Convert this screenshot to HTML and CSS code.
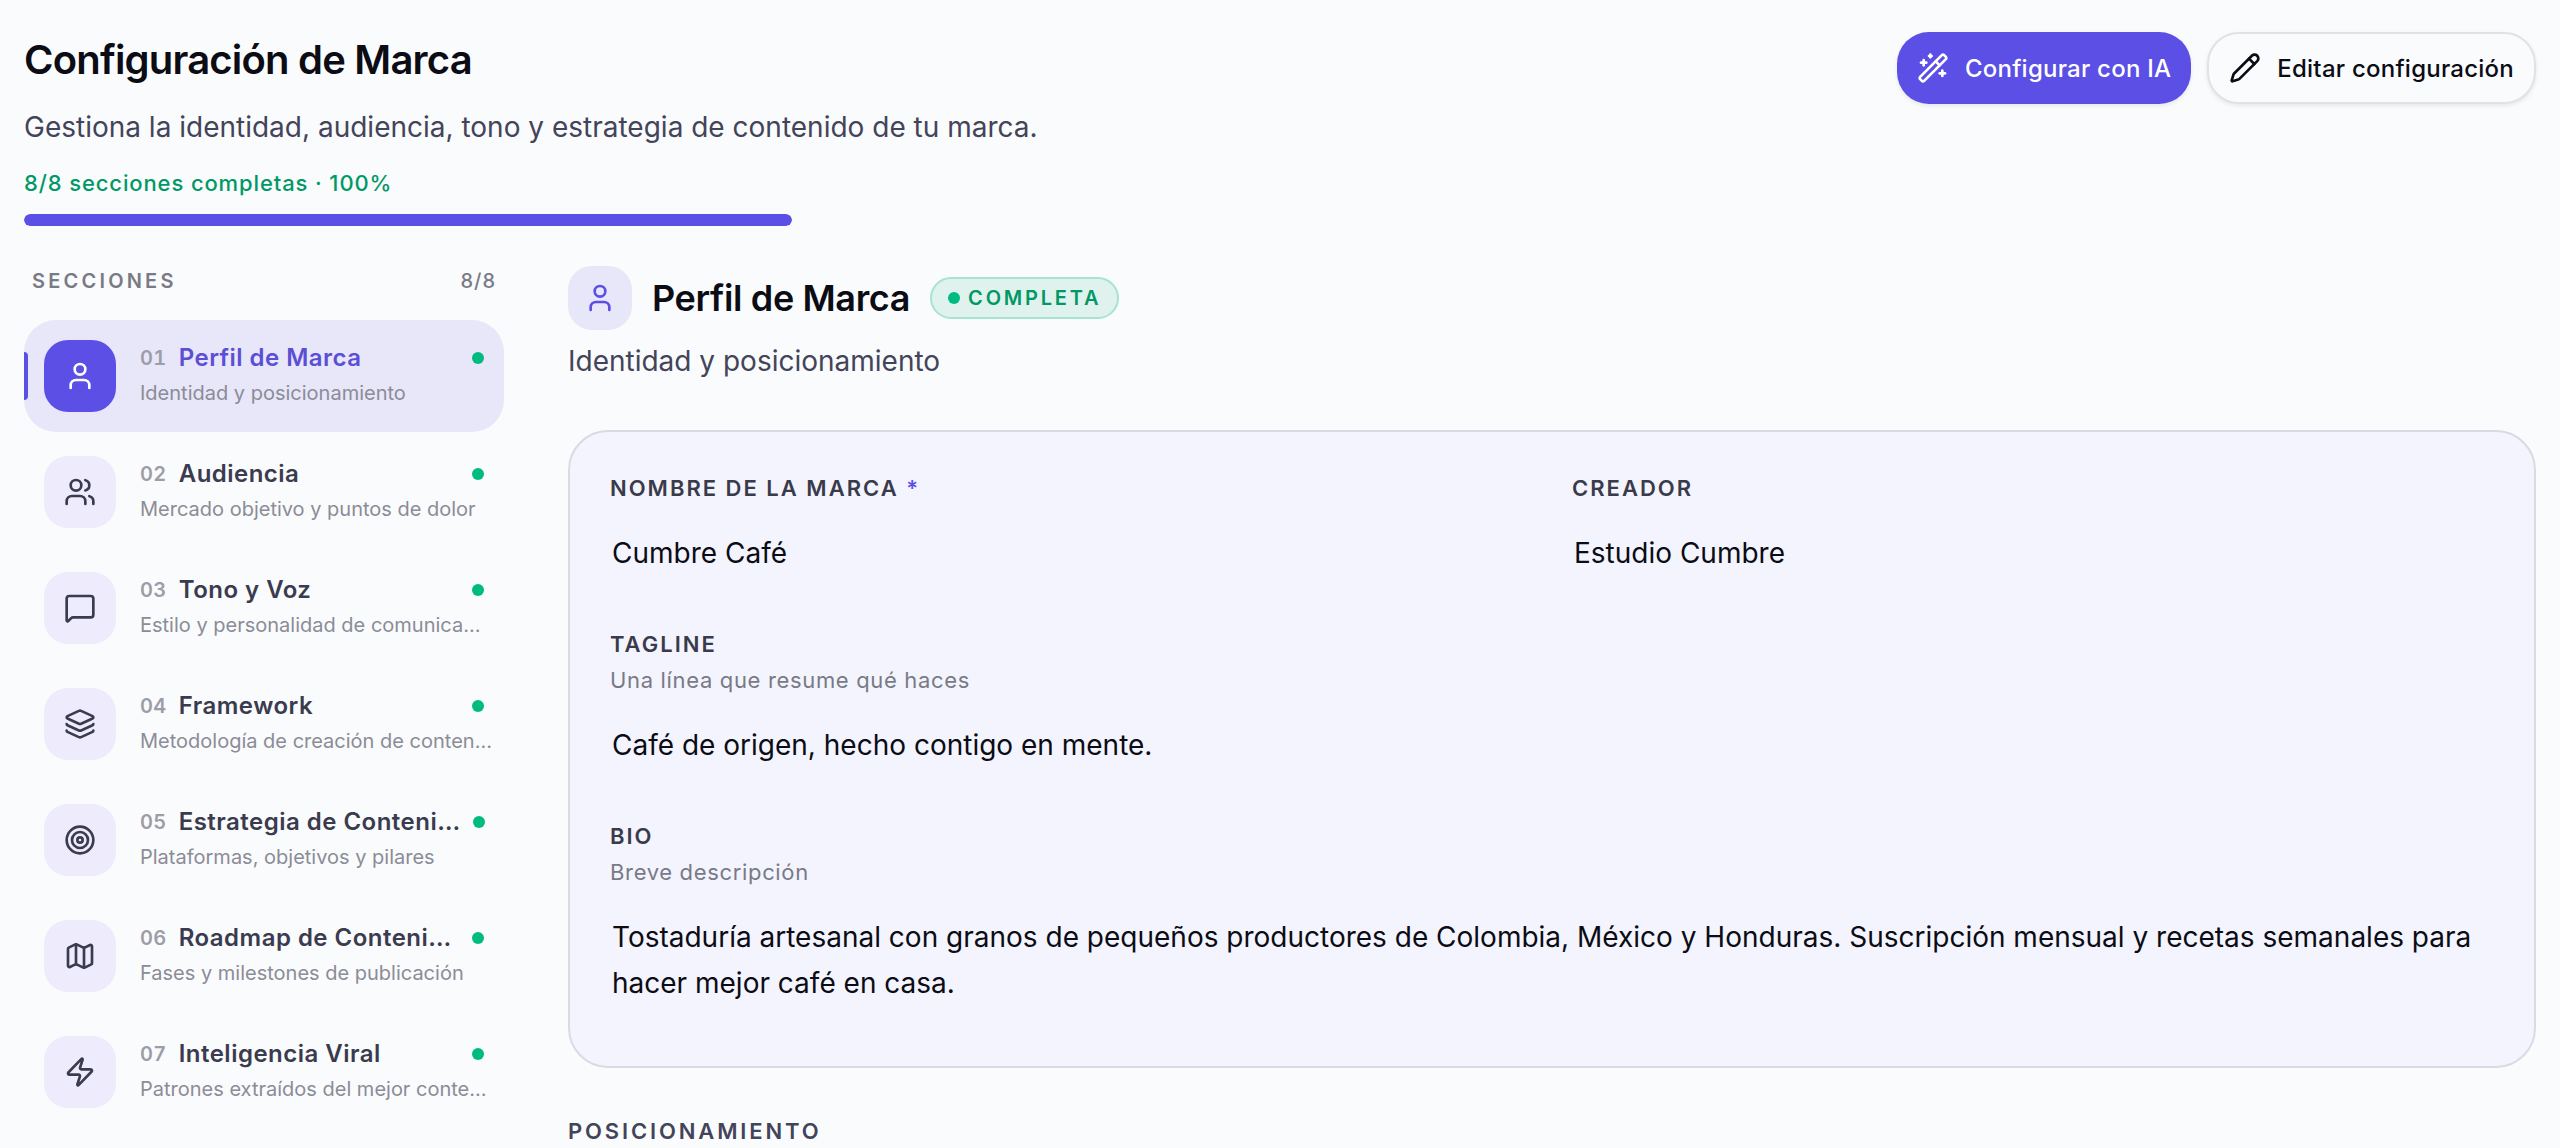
FILE: index.html
```html
<!DOCTYPE html>
<html lang="es">

<head>
    <meta charset="UTF-8">
    <meta name="viewport" content="width=device-width, initial-scale=1">
    <title>Configuración de Marca</title>
    <link rel="stylesheet" href="styles.css">
</head>

<body>

    <div class="page">
        <header class="page-header">
            <div class="intro">
                <h1>Configuración de Marca</h1>
                <p class="lead">Gestiona la identidad, audiencia, tono y estrategia de contenido de tu marca.</p>
                <label class="progress-label" for="progress">8/8 secciones completas · 100%</label>
                <progress class="progress" id="progress" value="8" max="8"></progress>
            </div>
            <div class="actions">
                <button type="button" class="btn btn-primary">
                    <svg class="icon" viewBox="0 0 24 24"><path d="m21.64 3.64-1.28-1.28a1.21 1.21 0 0 0-1.72 0L2.36 18.64a1.21 1.21 0 0 0 0 1.72l1.28 1.28a1.2 1.2 0 0 0 1.72 0L21.64 5.36a1.2 1.2 0 0 0 0-1.72"/><path d="m14 7 3 3"/><path d="M5 6v4"/><path d="M19 14v4"/><path d="M10 2v2"/><path d="M7 8H3"/><path d="M21 16h-4"/><path d="M11 3H9"/></svg>
                    Configurar con IA
                </button>
                <button type="button" class="btn btn-outline">
                    <svg class="icon" viewBox="0 0 24 24"><path d="M21.174 6.812a1 1 0 0 0-3.986-3.987L3.842 16.174a2 2 0 0 0-.5.83l-1.321 4.352a.5.5 0 0 0 .623.622l4.353-1.32a2 2 0 0 0 .83-.497z"/><path d="m15 5 4 4"/></svg>
                    Editar configuración
                </button>
            </div>
        </header>

        <div class="layout">
            <!-- Lista de secciones -->
            <nav class="sidebar" aria-label="Secciones">
                <div class="sidebar-head">
                    <span>SECCIONES</span>
                    <span class="count">8/8</span>
                </div>
                <button type="button" class="item active">
                    <span class="tile"><svg class="icon" viewBox="0 0 24 24"><path d="M19 21v-2a4 4 0 0 0-4-4H9a4 4 0 0 0-4 4v2"/><circle cx="12" cy="7" r="4"/></svg></span>
                    <span class="item-text">
                        <span class="item-row"><span class="num">01</span><span class="name">Perfil de Marca</span><span class="dot"></span></span>
                        <span class="desc">Identidad y posicionamiento</span>
                    </span>
                </button>
                <button type="button" class="item">
                    <span class="tile"><svg class="icon" viewBox="0 0 24 24"><path d="M16 21v-2a4 4 0 0 0-4-4H6a4 4 0 0 0-4 4v2"/><path d="M16 3.128a4 4 0 0 1 0 7.744"/><path d="M22 21v-2a4 4 0 0 0-3-3.87"/><circle cx="9" cy="7" r="4"/></svg></span>
                    <span class="item-text">
                        <span class="item-row"><span class="num">02</span><span class="name">Audiencia</span><span class="dot"></span></span>
                        <span class="desc">Mercado objetivo y puntos de dolor</span>
                    </span>
                </button>
                <button type="button" class="item">
                    <span class="tile"><svg class="icon" viewBox="0 0 24 24"><path d="M22 17a2 2 0 0 1-2 2H6.828a2 2 0 0 0-1.414.586l-2.202 2.202A.71.71 0 0 1 2 21.286V5a2 2 0 0 1 2-2h16a2 2 0 0 1 2 2z"/></svg></span>
                    <span class="item-text">
                        <span class="item-row"><span class="num">03</span><span class="name">Tono y Voz</span><span class="dot"></span></span>
                        <span class="desc">Estilo y personalidad de comunica…</span>
                    </span>
                </button>
                <button type="button" class="item">
                    <span class="tile"><svg class="icon" viewBox="0 0 24 24"><path d="M12.83 2.18a2 2 0 0 0-1.66 0L2.6 6.08a1 1 0 0 0 0 1.83l8.58 3.91a2 2 0 0 0 1.66 0l8.58-3.9a1 1 0 0 0 0-1.83z"/><path d="M2 12a1 1 0 0 0 .58.91l8.6 3.91a2 2 0 0 0 1.65 0l8.58-3.9A1 1 0 0 0 22 12"/><path d="M2 17a1 1 0 0 0 .58.91l8.6 3.91a2 2 0 0 0 1.65 0l8.58-3.9A1 1 0 0 0 22 17"/></svg></span>
                    <span class="item-text">
                        <span class="item-row"><span class="num">04</span><span class="name">Framework</span><span class="dot"></span></span>
                        <span class="desc">Metodología de creación de conten…</span>
                    </span>
                </button>
                <button type="button" class="item">
                    <span class="tile"><svg class="icon" viewBox="0 0 24 24"><circle cx="12" cy="12" r="10"/><circle cx="12" cy="12" r="6"/><circle cx="12" cy="12" r="2"/></svg></span>
                    <span class="item-text">
                        <span class="item-row"><span class="num">05</span><span class="name">Estrategia de Conteni…</span><span class="dot"></span></span>
                        <span class="desc">Plataformas, objetivos y pilares</span>
                    </span>
                </button>
                <button type="button" class="item">
                    <span class="tile"><svg class="icon" viewBox="0 0 24 24"><path d="M14.106 5.553a2 2 0 0 0 1.788 0l3.659-1.83A1 1 0 0 1 21 4.619v12.764a1 1 0 0 1-.553.894l-4.553 2.277a2 2 0 0 1-1.788 0l-4.212-2.106a2 2 0 0 0-1.788 0l-3.659 1.83A1 1 0 0 1 3 19.381V6.618a1 1 0 0 1 .553-.894l4.553-2.277a2 2 0 0 1 1.788 0z"/><path d="M15 5.764v15"/><path d="M9 3.236v15"/></svg></span>
                    <span class="item-text">
                        <span class="item-row"><span class="num">06</span><span class="name">Roadmap de Conteni…</span><span class="dot"></span></span>
                        <span class="desc">Fases y milestones de publicación</span>
                    </span>
                </button>
                <button type="button" class="item">
                    <span class="tile"><svg class="icon" viewBox="0 0 24 24"><path d="M4 14a1 1 0 0 1-.78-1.63l9.9-10.2a.5.5 0 0 1 .86.46l-1.92 6.02A1 1 0 0 0 13 10h7a1 1 0 0 1 .78 1.63l-9.9 10.2a.5.5 0 0 1-.86-.46l1.92-6.02A1 1 0 0 0 11 14z"/></svg></span>
                    <span class="item-text">
                        <span class="item-row"><span class="num">07</span><span class="name">Inteligencia Viral</span><span class="dot"></span></span>
                        <span class="desc">Patrones extraídos del mejor conte…</span>
                    </span>
                </button>
            </nav>

            <!-- Detalle de la sección -->
            <main class="content">
                <div class="section-head">
                    <span class="section-tile"><svg class="icon" viewBox="0 0 24 24"><path d="M19 21v-2a4 4 0 0 0-4-4H9a4 4 0 0 0-4 4v2"/><circle cx="12" cy="7" r="4"/></svg></span>
                    <h2>Perfil de Marca</h2>
                    <span class="badge"><span class="dot"></span>COMPLETA</span>
                </div>
                <p class="section-sub">Identidad y posicionamiento</p>

                <form class="card">
                    <div class="field">
                        <label for="nombre">NOMBRE DE LA MARCA <span class="required">*</span></label>
                        <input type="text" id="nombre" value="Cumbre Café" readonly>
                    </div>
                    <div class="field">
                        <label for="creador">CREADOR</label>
                        <input type="text" id="creador" value="Estudio Cumbre" readonly>
                    </div>
                    <div class="field full">
                        <label for="tagline">TAGLINE</label>
                        <p class="hint">Una línea que resume qué haces</p>
                        <input type="text" id="tagline" value="Café de origen, hecho contigo en mente." readonly>
                    </div>
                    <div class="field full">
                        <label for="bio">BIO</label>
                        <p class="hint">Breve descripción</p>
                        <textarea id="bio" rows="2" readonly>Tostaduría artesanal con granos de pequeños productores de Colombia, México y Honduras. Suscripción mensual y recetas semanales para hacer mejor café en casa.</textarea>
                    </div>
                </form>

                <h3>POSICIONAMIENTO</h3>
            </main>
        </div>
    </div>

</body>

</html>
```
FILE: styles.css
```css
* {
    box-sizing: border-box;
}

body {
    margin: 0;
    background-color: #fafbfd;
    color: #0b0c14;
    font-family: Inter, "Liberation Sans", sans-serif;
}

h1,
h2,
h3,
p {
    margin: 0;
}

button,
input,
textarea {
    font-family: inherit;
    color: inherit;
}

.page {
    height: 100vh;
    padding: 32px 24px 0;
    overflow: hidden;
}

.icon {
    width: 32px;
    height: 32px;
    flex-shrink: 0;
    fill: none;
    stroke: currentColor;
    stroke-width: 2;
    stroke-linecap: round;
    stroke-linejoin: round;
}

.dot {
    width: 12px;
    height: 12px;
    flex-shrink: 0;
    border-radius: 50%;
    background-color: #00bb7f;
}

/* header */
.page-header {
    display: flex;
    justify-content: space-between;
    align-items: flex-start;
}

h1 {
    font-size: 40px;
    font-weight: 600;
    line-height: 56px;
    letter-spacing: -0.02em;
}

.lead {
    margin-top: 16px;
    font-size: 28px;
    line-height: 46px;
    color: #434459;
}

.progress-label {
    display: block;
    margin-top: 16px;
    font-size: 22px;
    font-weight: 500;
    line-height: 34px;
    letter-spacing: 0.04em;
    color: #009966;
}

.progress {
    display: block;
    width: 768px;
    max-width: 100%;
    height: 12px;
    margin-top: 14px;
    border: none;
    border-radius: 6px;
    overflow: hidden;
    appearance: none;
    background-color: #e9e7fb;
}

.progress::-webkit-progress-bar {
    background-color: #e9e7fb;
}

.progress::-webkit-progress-value {
    border-radius: 6px;
    background-color: #5b4fe6;
}

.actions {
    display: flex;
    gap: 16px;
}

.btn {
    display: flex;
    align-items: center;
    gap: 16px;
    height: 72px;
    padding: 0 20px;
    border: none;
    border-radius: 32px;
    font-size: 24px;
    font-weight: 500;
    letter-spacing: 0.01em;
    box-shadow: 0 2px 4px rgba(0, 0, 0, 0.08);
    cursor: pointer;
}

.btn-primary {
    background-color: #5b4fe6;
    color: #fff;
}

.btn-outline {
    border: 2px solid #e1e2e6;
    background-color: #fafbfd;
}

/* layout */
.layout {
    display: grid;
    grid-template-columns: 480px 1fr;
    gap: 64px;
    margin-top: 40px;
}

/* sidebar */
.sidebar {
    display: flex;
    flex-direction: column;
    gap: 4px;
}

.sidebar-head {
    display: flex;
    justify-content: space-between;
    margin-bottom: 20px;
    padding: 0 8px;
    font-size: 20px;
    font-weight: 600;
    line-height: 30px;
    letter-spacing: 0.16em;
    color: #787a86;
}

.count {
    font-weight: 500;
    letter-spacing: 1px;
}

.item {
    position: relative;
    display: flex;
    align-items: flex-start;
    gap: 24px;
    height: 112px;
    padding: 20px;
    border: none;
    border-radius: 32px;
    background-color: transparent;
    text-align: left;
    cursor: pointer;
}

.tile {
    display: flex;
    align-items: center;
    justify-content: center;
    width: 72px;
    height: 72px;
    flex-shrink: 0;
    border-radius: 24px;
    background-color: #eeecfc;
    color: #3a3b4e;
}

.item-text {
    flex: 1;
    min-width: 0;
}

.item-row {
    display: flex;
    align-items: center;
    gap: 12px;
    line-height: 36px;
}

.num {
    font-size: 20px;
    font-weight: 600;
    font-variant-numeric: tabular-nums;
    letter-spacing: 0.02em;
    color: #9c9da7;
}

.name {
    flex: 1;
    white-space: nowrap;
    font-size: 24px;
    font-weight: 600;
    letter-spacing: 0.02em;
    color: #3a3b4e;
}

.desc {
    display: block;
    margin-top: 2px;
    white-space: nowrap;
    font-size: 20px;
    line-height: 30px;
    color: #8b8c97;
}

.item.active {
    background-color: #e8e6f9;
}

.item.active::before {
    content: "";
    position: absolute;
    left: 0;
    top: 32px;
    width: 4px;
    height: 48px;
    border-radius: 0 4px 4px 0;
    background-color: #5b4fe6;
}

.item.active .tile {
    background-color: #5b4fe6;
    color: #fff;
}

.item.active .name {
    color: #5b4fd6;
}

/* content */
.section-head {
    display: flex;
    align-items: center;
    gap: 20px;
    height: 64px;
}

.section-tile {
    display: flex;
    align-items: center;
    justify-content: center;
    width: 64px;
    height: 64px;
    border-radius: 24px;
    background-color: #e8e6f9;
    color: #5b4fe6;
}

h2 {
    font-size: 36px;
    font-weight: 600;
    line-height: 54px;
    letter-spacing: -0.01em;
}

.badge {
    display: flex;
    align-items: center;
    gap: 8px;
    height: 42px;
    padding: 0 16px;
    border: 2px solid #a6e4cf;
    border-radius: 21px;
    background-color: #e0f2ed;
    font-size: 20px;
    font-weight: 600;
    letter-spacing: 0.14em;
    color: #009966;
}

.section-sub {
    margin-top: 8px;
    font-size: 28px;
    line-height: 46px;
    color: #434459;
}

.card {
    display: grid;
    grid-template-columns: 1fr 1fr;
    gap: 52px 40px;
    margin-top: 46px;
    padding: 40px 40px 52px;
    border: 2px solid #d9dae2;
    border-radius: 40px;
    background-color: #f4f4fe;
}

.full {
    grid-column: 1 / -1;
}

.field label,
.hint {
    font-size: 22px;
    line-height: 32px;
}

.field label {
    display: block;
    font-weight: 600;
    letter-spacing: 2px;
    color: #3a3b4a;
}

.required {
    color: #5b4fe6;
}

.hint {
    margin-top: 4px;
    letter-spacing: 0.03em;
    color: #787a86;
}

.field input,
.field textarea {
    display: block;
    width: 100%;
    margin-top: 26px;
    padding: 0 2px;
    border: none;
    outline: none;
    background-color: transparent;
    font-size: 28px;
    line-height: 46px;
}

.field input {
    height: 46px;
}

.field textarea {
    height: 100px;
    resize: none;
    overflow: hidden;
}

h3 {
    margin-top: 46px;
    font-size: 22px;
    font-weight: 600;
    line-height: 34px;
    letter-spacing: 0.13em;
    color: #434459;
}
```
